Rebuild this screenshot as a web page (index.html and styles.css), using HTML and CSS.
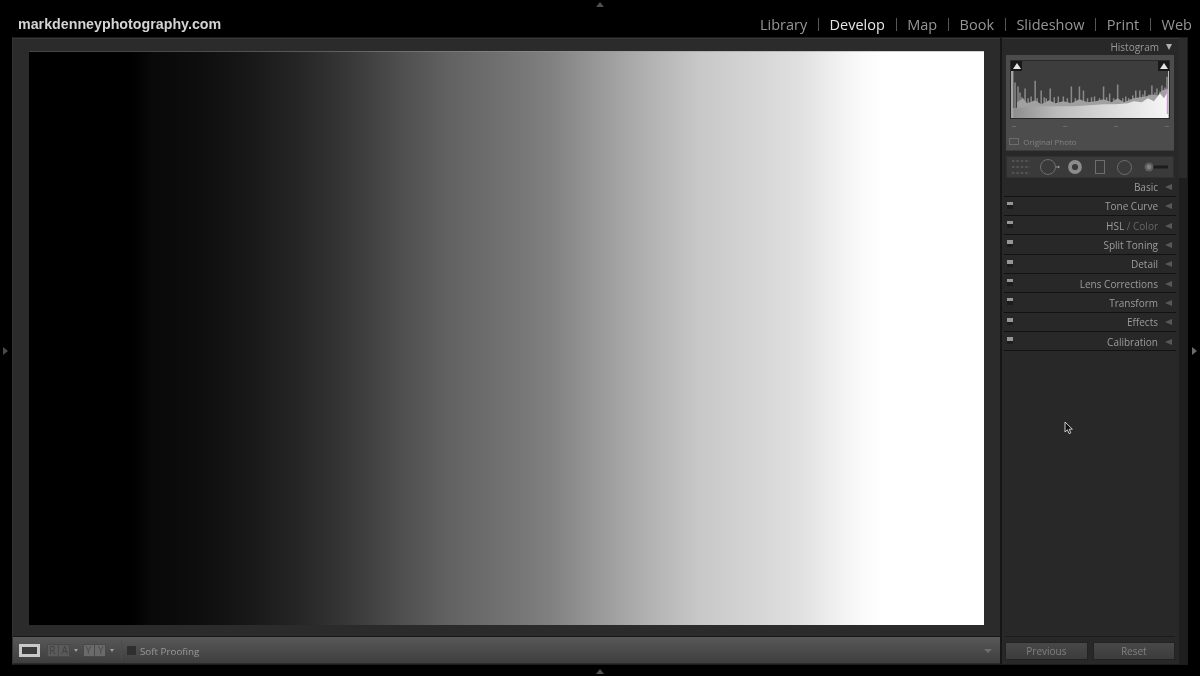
FILE: index.html
```html
<!DOCTYPE html>
<html lang="en">
  <head>
    <meta charset="UTF-8" />
    <title>Develop</title>
    <link rel="stylesheet" href="styles.css">
  </head>

  <body>
    <span class="edge edge-top"></span>
    <span class="edge edge-bottom"></span>
    <span class="edge edge-left"></span>
    <span class="edge edge-right"></span>

    <header class="topbar">
      <div class="logo">markdenneyphotography.com</div>
      <nav class="modules">
        <a>Library</a><i></i>
        <a class="active">Develop</a><i></i>
        <a>Map</a><i></i>
        <a>Book</a><i></i>
        <a>Slideshow</a><i></i>
        <a>Print</a><i></i>
        <a>Web</a>
      </nav>
    </header>

    <div class="frame">
      <main class="left">
        <div class="canvas">
          <div class="photo"></div>
        </div>
        <div class="toolbar">
          <span class="loupe"></span>
          <span class="pair">R<em></em>A</span>
          <span class="caret"></span>
          <span class="pair pair-y">Y<em></em>Y</span>
          <span class="caret"></span>
          <span class="tool-sep"></span>
          <span class="check"></span>
          <span class="proof">Soft Proofing</span>
          <span class="caret caret-end"></span>
        </div>
      </main>

      <aside class="right">
        <div class="panel-top">Histogram <span class="down"></span></div>

        <div class="histo">
          <div class="graph">
            <svg viewBox="0 0 157 58" preserveAspectRatio="none">
              <defs>
                <linearGradient id="band" x1="0" x2="1" y1="0" y2="0">
                  <stop offset="0" stop-color="#8c8c8c" />
                  <stop offset="0.3" stop-color="#bcbcbc" />
                  <stop offset="0.7" stop-color="#e0e0e0" />
                  <stop offset="1" stop-color="#f6f6f6" />
                </linearGradient>
              </defs>
              <path fill="none" stroke="#8a8a8a" stroke-width="1.5" d="M4 58V22M7 58V26M9 58V32M11 58V37M14 58V28M17 58V38M20 58V36M24 58V20M26 58V38M30 58V30M33 58V37M35 58V38M39 58V28M43 58V37M47 58V36M52 58V36M56 58V38M60 58V26M64 58V38M68 58V26M72 58V30M76 58V38M80 58V37M83 58V36M88 58V38M92 58V26M95 58V37M98 58V33M102 58V38M106 58V24M111 58V38M114 58V36M117 58V38M121 58V35M124 58V30M128 58V30M131 58V34M133 58V30M137 58V34M140 58V25M143 58V32M145 58V28M148 58V31M150 58V25M153 58V27M155 58V16" />
              <polygon fill="#a0a0a0" points="6,58 6,42 12,38 16,43 24,40 30,44 38,40 44,43 52,41 60,43 68,39 76,42 84,41 92,39 100,42 106,38 112,42 122,38 128,37 134,36 140,34 146,35 150,30 156,28 156,58" />
              <polygon fill="url(#band)" points="0,58 0,48 14,47 30,46 46,46 62,46 78,45 92,44 104,44 116,43 122,41 130,42 136,38 142,41 148,33 152,38 156,31 156,58" />
              <rect x="154.8" y="30" width="1.2" height="24" fill="#c79acb" />
              <rect x="0" y="6" width="2.4" height="52" fill="#a4a4a4" />
              <rect x="156" y="6" width="1" height="52" fill="#bcbcbc" />
            </svg>
            <span class="clip clip-l"></span>
            <span class="clip clip-r"></span>
          </div>
          <div class="ticks"><b></b><b></b><b></b><b></b></div>
          <div class="original"><span class="orig-box"></span>Original Photo</div>
        </div>

        <div class="tools">
          <svg class="tool" width="18" height="14" viewBox="0 0 18 14" fill="none" stroke="#5e5e5e" stroke-width="1.4" stroke-dasharray="2.4 2">
            <path d="M0 1H18M0 7H18M0 13H18" />
          </svg>
          <svg class="tool" width="21" height="16" viewBox="0 0 21 16" fill="none" stroke="#6e6e6e">
            <circle cx="8" cy="8" r="7.5" />
            <path d="M16 8H18" stroke="#999" />
            <path d="M18 6.5L20 8L18 9.5Z" fill="#999" stroke="none" />
          </svg>
          <svg class="tool" width="14" height="14" viewBox="0 0 14 14" fill="none">
            <circle cx="7" cy="7" r="5" stroke="#8c8c8c" stroke-width="3.8" />
          </svg>
          <svg class="tool" width="10" height="14" viewBox="0 0 10 14" fill="none">
            <rect x="0.5" y="0.5" width="9" height="13" stroke="#6e6e6e" />
          </svg>
          <svg class="tool" width="15" height="15" viewBox="0 0 15 15" fill="none">
            <circle cx="7.5" cy="7.5" r="7" stroke="#6e6e6e" />
          </svg>
          <svg class="tool" width="24" height="10" viewBox="0 0 24 10">
            <rect x="5" y="3.5" width="19" height="3" fill="#1c1c1c" />
            <circle cx="5" cy="5" r="4.5" fill="#5c5c5c" />
            <circle cx="5" cy="5" r="2.4" fill="#808080" />
          </svg>
        </div>

        <section class="panels">
          <div class="panel first"><span class="name">Basic</span><span class="tri"></span></div>
          <div class="panel"><span class="dot"></span><span class="name">Tone Curve</span><span class="tri"></span></div>
          <div class="panel"><span class="dot"></span><span class="name">HSL <span class="dim">/ Color</span></span><span class="tri"></span></div>
          <div class="panel"><span class="dot"></span><span class="name">Split Toning</span><span class="tri"></span></div>
          <div class="panel"><span class="dot"></span><span class="name">Detail</span><span class="tri"></span></div>
          <div class="panel"><span class="dot"></span><span class="name">Lens Corrections</span><span class="tri"></span></div>
          <div class="panel"><span class="dot"></span><span class="name">Transform</span><span class="tri"></span></div>
          <div class="panel"><span class="dot"></span><span class="name">Effects</span><span class="tri"></span></div>
          <div class="panel"><span class="dot"></span><span class="name">Calibration</span><span class="tri"></span></div>
        </section>

        <svg class="cursor" width="10" height="14" viewBox="0 0 10 14">
          <path d="M1 1V11L3.4 8.8L5 12.6L6.8 11.8L5.2 8.2H8.4Z" fill="#111" stroke="#ddd" stroke-width="0.9" />
        </svg>

        <div class="buttons">
          <button>Previous</button>
          <button>Reset</button>
        </div>
      </aside>

      <div class="scroll"><span class="thumb"></span></div>
    </div>
  </body>
</html>
```

FILE: styles.css
```css
* {
  margin: 0;
  box-sizing: border-box;
}

body {
  width: 1200px;
  height: 676px;
  overflow: hidden;
  background-color: #000;
  font-family: "Open Sans", "Liberation Sans", sans-serif;
  position: relative;
}

/* little arrows on the window edges */
.edge {
  position: absolute;
  width: 0;
  height: 0;
  border-style: solid;
  border-color: transparent;
}

.edge-top {
  left: 596px;
  top: 2px;
  border-width: 0 4px 5px 4px;
  border-bottom-color: #4e4e4e;
}

.edge-bottom {
  left: 596px;
  top: 669px;
  border-width: 0 4px 5px 4px;
  border-bottom-color: #4e4e4e;
}

.edge-left {
  left: 3px;
  top: 347px;
  border-width: 4px 0 4px 5px;
  border-left-color: #4a4a4a;
}

.edge-right {
  left: 1192px;
  top: 347px;
  border-width: 4px 0 4px 5px;
  border-left-color: #6a6a6a;
}

/* the reference is a soft video frame */
.topbar,
.frame {
  filter: blur(0.4px);
}

.topbar {
  height: 37px;
  padding: 15px 8px 0 18px;
  display: flex;
  justify-content: space-between;
  align-items: flex-start;
}

.logo {
  font-family: "Liberation Sans", sans-serif;
  font-weight: bold;
  font-size: 14.25px;
  line-height: 18px;
  color: #d4d4d4;
}

.modules {
  display: flex;
  align-items: center;
  height: 18px;
  font-size: 14.5px;
  color: #969696;
}

.modules i {
  width: 1px;
  height: 13px;
  margin: 0 10.7px;
  background-color: #555;
}

.modules .active {
  color: #e6e6e6;
}

.frame {
  margin-left: 12px;
  width: 1176px;
  height: 628px;
  display: flex;
  background-color: #161616;
  border: 1px solid #1c1c1c;
  border-left-color: #333;
}

.left {
  width: 988px;
  display: flex;
  flex-direction: column;
}

.canvas {
  flex: 1;
  background-color: #2b2b2b;
  padding: 12px 16px 11px 16px;
  border-top: 1px solid #383838;
  border-bottom: 1px solid #161616;
}

.photo {
  height: 100%;
  border-top: 1px solid rgba(150, 150, 150, 0.45);
  background: linear-gradient(
    to right,
    #000 0%,
    #000 10.6%,
    #080808 12.7%,
    #0e0e0e 17.9%,
    #181818 23.1%,
    #262626 28.4%,
    #383838 33.6%,
    #4e4e4e 38.8%,
    #626262 44.1%,
    #707070 49.3%,
    #808080 54.6%,
    #9a9a9a 59.8%,
    #b2b2b2 65%,
    #c8c8c8 70.3%,
    #d4d4d4 75.5%,
    #e0e0e0 80.7%,
    #f0f0f0 84.5%,
    #fbfbfb 87.5%,
    #fff 89.5%,
    #fff 100%
  );
}

.toolbar {
  height: 27px;
  display: flex;
  align-items: center;
  padding-left: 6px;
  background: linear-gradient(to bottom, #585858, #3e3e3e);
  border-bottom: 1px solid #2a2a2a;
  font-size: 10px;
  color: #9a9a9a;
  position: relative;
}

.loupe {
  width: 21px;
  height: 13px;
  background-color: #3a3a3a;
  border: 3px solid #c8c8c8;
  margin-right: 7px;
}

.pair {
  width: 23px;
  height: 13px;
  display: flex;
  align-items: center;
  justify-content: space-around;
  background-color: #5a5a5a;
  border: 1px solid #484848;
  color: #424242;
  font-size: 10px;
}

.pair em {
  width: 1px;
  height: 11px;
  background-color: #4a4a4a;
}

.pair-y {
  background-color: #6a6a6a;
  color: #4a4a4a;
}

.caret {
  width: 0;
  height: 0;
  margin: 0 5px 0 4px;
  border-style: solid;
  border-width: 3px 2.5px 0 2.5px;
  border-color: #a0a0a0 transparent transparent transparent;
}

.tool-sep {
  width: 1px;
  height: 20px;
  margin-left: 2px;
  margin-right: 5px;
  background-color: #4c4c4c;
}

.check {
  width: 9px;
  height: 9px;
  margin-right: 4px;
  background-color: #2e2e2e;
}

.proof {
  font-size: 9.8px;
  padding-top: 2px;
}

.caret-end {
  position: absolute;
  left: 971px;
  top: 12px;
  margin: 0;
  border-width: 4px 4px 0 4px;
  border-top-color: #6e6e6e;
}

.right {
  width: 177px;
  margin-left: 2px;
  background-color: #282828;
  border-top: 1px solid #383838;
  display: flex;
  flex-direction: column;
  position: relative;
}

.panel-top {
  height: 16px;
  display: flex;
  justify-content: flex-end;
  align-items: center;
  padding-right: 7px;
  font-size: 10px;
  color: #999;
}

.down {
  width: 0;
  height: 0;
  margin-left: 7px;
  border-style: solid;
  border-width: 6px 3.5px 0 3.5px;
  border-color: #b0b0b0 transparent transparent transparent;
}

.histo {
  margin-left: 4px;
  width: 168px;
  height: 96px;
  background-color: #4c4c4c;
  padding: 6px 5px 0;
  border-bottom: 1px solid #3c3c3c;
}

.graph {
  height: 57px;
  background-color: #3d3d3d;
  outline: 1px solid #2a2a2a;
  position: relative;
}

.graph svg {
  display: block;
  width: 100%;
  height: 100%;
}

.clip {
  position: absolute;
  top: 0;
  width: 11px;
  height: 10px;
  background-color: #181818;
}

.clip::after {
  content: "";
  position: absolute;
  left: 1.5px;
  top: 2px;
  border-style: solid;
  border-width: 0 4px 6px 4px;
  border-color: transparent transparent #e4e4e4 transparent;
}

.clip-l {
  left: 0;
}

.clip-r {
  right: 0;
}

.ticks {
  display: flex;
  justify-content: space-between;
  margin-top: 8px;
  padding-left: 1px;
}

.ticks b {
  width: 4px;
  height: 1px;
  background-color: #6c6c6c;
}

.original {
  margin-top: 9px;
  margin-left: -2px;
  display: flex;
  align-items: center;
  font-size: 8px;
  color: #808080;
}

.orig-box {
  width: 10px;
  height: 7px;
  margin-right: 4px;
  border: 1px solid #6c6c6c;
}

.tools {
  margin: 5px 0 0 4px;
  width: 168px;
  height: 22px;
  background-color: #3a3a3a;
  border: 1px solid #303030;
  display: flex;
  align-items: center;
  padding-left: 5px;
}

.tool:nth-child(1) {
  margin-right: 10px;
}

.tool:nth-child(2) {
  margin-right: 7px;
}

.tool:nth-child(3) {
  margin-right: 13px;
}

.tool:nth-child(4) {
  margin-right: 12px;
}

.tool:nth-child(5) {
  margin-right: 12px;
}

.panel {
  height: 19.35px;
  margin: 0 3px 0 2px;
  padding: 1px 4px 0 0;
  display: flex;
  justify-content: flex-end;
  align-items: center;
  font-size: 10px;
  color: #9c9c9c;
  border-bottom: 1px solid #121212;
  position: relative;
}

.panel.first {
  height: 18.5px;
}

.name {
  margin-right: 7px;
}

.dim {
  color: #666;
}

.tri {
  width: 0;
  height: 0;
  border-style: solid;
  border-width: 3.5px 7px 3.5px 0;
  border-color: transparent #585858 transparent transparent;
}

.dot {
  position: absolute;
  left: 3px;
  top: 5px;
  width: 6px;
  height: 7px;
  background: linear-gradient(to bottom, #969696 0 50%, #1c1c1c 50%);
}

.cursor {
  position: absolute;
  left: 62px;
  top: 382px;
}

.buttons {
  margin-top: auto;
  margin-left: 3px;
  margin-right: 4px;
  padding: 5px 0 4px;
  border-top: 1px solid #1c1c1c;
  height: 28px;
  display: flex;
  gap: 5px;
}

.buttons button {
  flex: 1;
  height: 18px;
  font-family: inherit;
  font-size: 10px;
  color: #808080;
  background: linear-gradient(to bottom, #484848, #3c3c3c);
  border: 1px solid #222;
  padding: 0;
}

.scroll {
  width: 8px;
  background-color: #1e1e1e;
  display: flex;
  flex-direction: column;
}

.thumb {
  height: 140px;
  background-color: #2c2c2c;
}
```
